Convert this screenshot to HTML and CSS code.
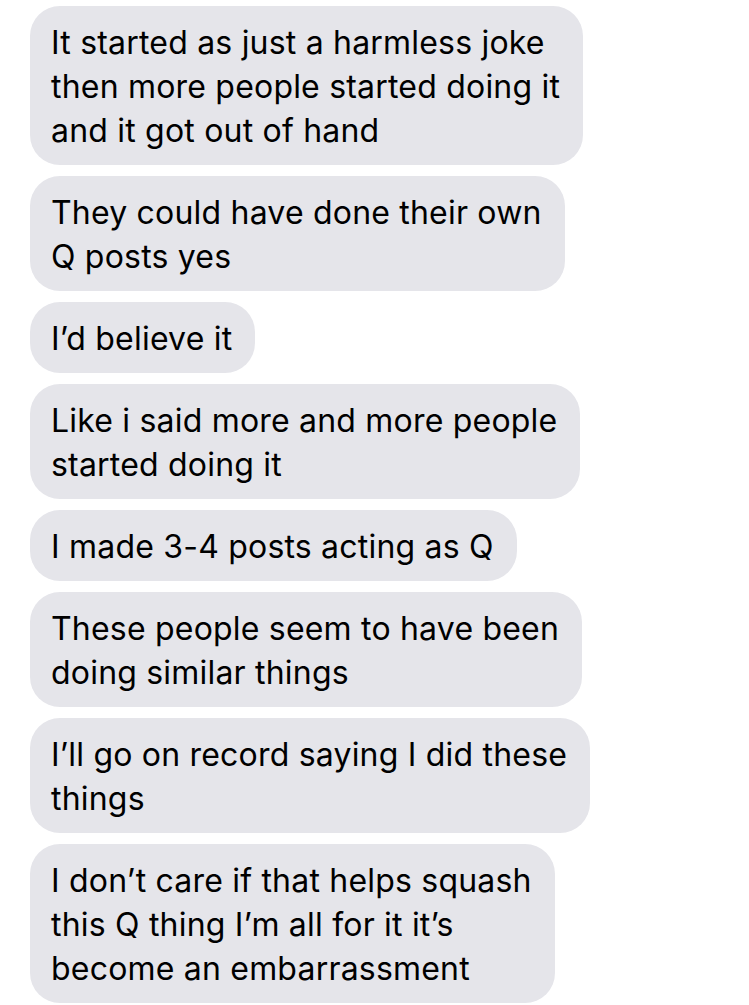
FILE: index.html
```html
<!DOCTYPE html>
<html>
<head>
<meta charset="utf-8">
<link rel="stylesheet" href="styles.css">
</head>
<body>
<div class="thread">
  <div class="bubble">It started as just a harmless joke<br>then more people started doing it<br>and it got out of hand</div>
  <div class="bubble">They could have done their own<br>Q posts yes</div>
  <div class="bubble">I’d believe it</div>
  <div class="bubble">Like i said more and more people<br>started doing it</div>
  <div class="bubble">I made 3-4 posts acting as Q</div>
  <div class="bubble">These people seem to have been<br>doing similar things</div>
  <div class="bubble">I’ll go on record saying I did these<br>things</div>
  <div class="bubble">I don’t care if that helps squash<br>this Q thing I’m all for it it’s<br>become an embarrassment</div>
</div>
</body>
</html>
```
FILE: styles.css
```css
html, body {
  margin: 0;
  padding: 0;
  background: #ffffff;
}
.thread {
  display: flex;
  flex-direction: column;
  align-items: flex-start;
  gap: 11px;
  padding: 6px 0 0 30px;
}
.bubble {
  background: #e5e5ea;
  color: #000;
  font-family: Inter, "Noto Sans", sans-serif;
  font-size: 32px;
  letter-spacing: 0.2px;
  line-height: 44px;
  padding: 15px 23px 12px 21px;
  border-radius: 30px;
  white-space: nowrap;
}
```
